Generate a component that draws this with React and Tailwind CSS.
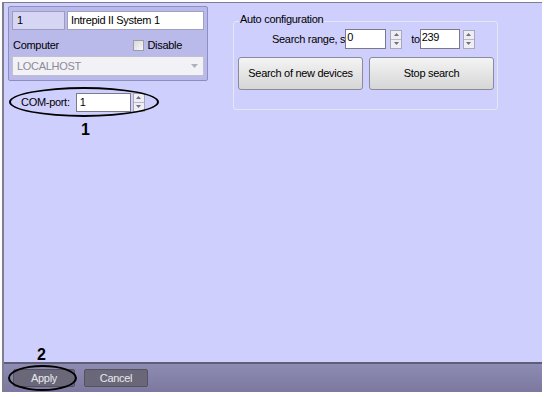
import React from "react";

const font = { fontFamily: '"Liberation Sans", Arial, sans-serif' };

function Spinner({ className = "" }) {
  return (
    <div className={"flex flex-col w-[12px] h-[19px] border border-[#a8a8b8] bg-[#eeeef4] " + className}>
      <div className="flex-1 flex items-center justify-center border-b border-[#b8b8c8]">
        <svg width="5" height="3" viewBox="0 0 5 3"><path d="M0 3 L2.5 0 L5 3Z" fill="#707080" /></svg>
      </div>
      <div className="flex-1 flex items-center justify-center">
        <svg width="5" height="3" viewBox="0 0 5 3"><path d="M0 0 L2.5 3 L5 0Z" fill="#707080" /></svg>
      </div>
    </div>
  );
}

export default function App() {
  return (
    <div className="w-[544px] h-[397px] bg-white text-[11px] tracking-[-0.3px] text-black" style={font}>
      <div className="ml-[2px] mt-[2px] w-[540px] h-[390px] flex flex-col border-l-2 border-t border-[#7e7e90] bg-[#cfcffd]">
        <div className="flex-1 flex pl-[4px] pt-[3px]">
          {/* left column */}
          <div className="w-[200px] flex flex-col">
            <div className="h-[75px] bg-[#b9b9ea] border border-[#8d8dc0] rounded-[2px] px-[3px] pt-[4px]">
              <div className="flex gap-[2px]">
                <div className="w-[53px] h-[19px] bg-[#d6d6f4] border border-[#9c9cc0] pl-[4px] leading-[17px]">1</div>
                <div className="flex-1 h-[19px] bg-white border border-[#a0a0c0] pl-[3px] leading-[17px]">Intrepid II System 1</div>
              </div>
              <div className="flex items-center mt-[9px] h-[13px]">
                <span className="pl-[1px]">Computer</span>
                <div className="ml-auto mr-[22px] flex items-center gap-[3px]">
                  <div className="w-[11px] h-[11px] border border-[#9a9aa8] bg-gradient-to-br from-[#d8d8d8] to-[#f8f8f8]" />
                  <span>Disable</span>
                </div>
              </div>
              <div className="mt-[4px] h-[20px] bg-[#f2f2f6] border border-[#c0c0d0] flex items-center pl-[4px] text-[#8a8a98]">
                <span>LOCALHOST</span>
                <svg className="ml-auto mr-[5px]" width="7" height="4" viewBox="0 0 7 4"><path d="M0 0 L3.5 4 L7 0Z" fill="#b0b0b8" /></svg>
              </div>
            </div>
            <div className="relative mt-[6px] ml-[1px] w-[150px] h-[30px] flex items-center">
              <div className="absolute inset-0 border-[2px] border-black rounded-[50%]" />
              <span className="ml-[12px]">COM-port:</span>
              <div className="ml-[6px] w-[55px] h-[19px] bg-white border border-[#7a7a8a] pl-[3px] leading-[17px]">1</div>
              <Spinner className="ml-[2px]" />
            </div>
            <div className="ml-[73px] mt-[3px] text-[16px] font-bold leading-[20px]">1</div>
          </div>
          {/* auto configuration */}
          <div className="ml-[25px] mt-[15px] relative w-[265px] h-[89px] border border-[#e6e6f6] rounded-[3px]">
            <span className="absolute left-[5px] top-[-10px] px-[1px] bg-[#cfcffd] leading-[14px]">Auto configuration</span>
            <div className="flex items-center mt-[7px] h-[20px]">
              <span className="ml-[38px]">Search range, s</span>
              <div className="w-[41px] h-[20px] bg-white border border-[#7a7a8a] pl-[1px] leading-[14px]">0</div>
              <Spinner className="ml-[4px]" />
              <span className="ml-[9px]">to</span>
              <div className="w-[40px] h-[20px] bg-white border border-[#7a7a8a] pl-[1px] leading-[14px]">239</div>
              <Spinner className="ml-[3px]" />
            </div>
            <div className="flex gap-[6px] mt-[8px] ml-[4px]">
              <div className="w-[125px] h-[33px] flex items-center justify-center border border-[#8a8a9a] rounded-[3px] bg-gradient-to-b from-[#f4f4f4] to-[#d6d6d6]">Search of new devices</div>
              <div className="w-[125px] h-[33px] flex items-center justify-center border border-[#8a8a9a] rounded-[3px] bg-gradient-to-b from-[#f4f4f4] to-[#d6d6d6]">Stop search</div>
            </div>
          </div>
        </div>
        {/* footer */}
        <div className="relative h-[30px] border-t-2 border-[#5e5e78] bg-gradient-to-b from-[#8e8cb2] to-[#7c78a0] flex items-center pl-[9px] gap-[9px]">
          <div className="absolute left-[33px] top-[-18px] text-[16px] font-bold leading-[18px]">2</div>
          <div className="relative w-[62px] h-[18px] flex items-center justify-center rounded-[2px] bg-[#6a6878] text-[#e8e8f0] border border-[#54525e]">
            Apply
            <div className="absolute left-[-6px] right-[-3px] top-[-5px] bottom-[-5px] border-[2px] border-black rounded-[50%]" />
          </div>
          <div className="w-[64px] h-[18px] flex items-center justify-center rounded-[2px] bg-[#6a6878] text-[#e8e8f0] border border-[#54525e]">Cancel</div>
        </div>
      </div>
    </div>
  );
}
